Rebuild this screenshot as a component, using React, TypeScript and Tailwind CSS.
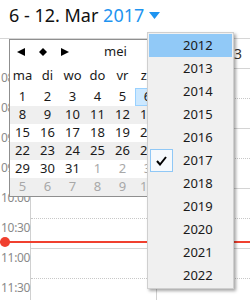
import React from "react";

const times = ["08:00", "08:30", "09:00", "09:30", "10:00", "10:30", "11:00", "11:30"];
const years = [2012, 2013, 2014, 2015, 2016, 2017, 2018, 2019, 2020, 2021, 2022];
const dayNames = ["ma", "di", "wo", "do", "vr", "za", "zo"];
const weeks: { d: number; muted: boolean }[][] = [
  [1, 2, 3, 4, 5, 6, 7].map((d) => ({ d, muted: false })),
  [8, 9, 10, 11, 12, 13, 14].map((d) => ({ d, muted: false })),
  [15, 16, 17, 18, 19, 20, 21].map((d) => ({ d, muted: false })),
  [22, 23, 24, 25, 26, 27, 28].map((d) => ({ d, muted: false })),
  [
    { d: 29, muted: false },
    { d: 30, muted: false },
    { d: 31, muted: false },
    { d: 1, muted: true },
    { d: 2, muted: true },
    { d: 3, muted: true },
    { d: 4, muted: true },
  ],
  [5, 6, 7, 8, 9, 10, 11].map((d) => ({ d, muted: true })),
];

export default function App() {
  return (
    <div className="relative w-[250px] h-[300px] overflow-hidden bg-white font-['Noto_Sans','Open_Sans',sans-serif] text-[#1a1a1a]">
      {/* header */}
      <div className="h-[39px] border-b border-[#d6d6d6] flex items-start pl-[9px] pt-[3px] text-[18px] leading-[24px]">
        <span className="text-[#111]">6 - 12. Mar&nbsp;</span>
        <span className="text-[#1e94f0]">2017</span>
        <svg width="11" height="8" viewBox="0 0 11 8" className="ml-[5px] mt-[9px]">
          <path d="M0 0 L11 0 L5.5 7 Z" fill="#1e94f0" />
        </svg>
      </div>

      {/* body */}
      <div className="flex flex-col">
        <div className="h-[29px] grid grid-cols-[31px_126px_1fr]">
          <div className="border-r border-[#d0d0d0]" />
          <div className="border-r border-[#d0d0d0]" />
          <div className="flex items-center justify-end pr-[8px] text-[14px] text-[#333]">13</div>
        </div>
        {times.map((t, i) => (
          <div key={t} className="h-[30px] grid grid-cols-[31px_126px_1fr]">
            <div className="border-r border-[#d0d0d0] pl-[1px] pt-[2px] text-[12px] leading-[16px] text-[#8a8a8a] tracking-[-0.3px]">
              {t}
            </div>
            <div
              className={
                i % 2 === 0
                  ? "border-t border-r border-t-[#d4d4d4] border-r-[#d0d0d0]"
                  : "border-t border-r border-dotted border-t-[#c8c8c8] border-r-[#d0d0d0] [border-right-style:solid]"
              }
            />
            <div
              className={
                i % 2 === 0
                  ? "border-t border-[#d4d4d4]"
                  : "border-t border-dotted border-[#c8c8c8]"
              }
            />
          </div>
        ))}
      </div>

      {/* current time indicator */}
      <div className="absolute left-0 right-0 top-[241px] h-[2px] bg-[#f0402f]" />
      <div className="absolute left-0 top-[237px] w-[10px] h-[10px] rounded-full bg-[#f0402f]" />

      {/* mini calendar */}
      <div className="absolute left-[9px] top-[39px] w-[178px] h-[158px] border border-[#8f8f8f] bg-white flex flex-col">
        <div className="h-[24px] flex items-center text-[13px]">
          <div className="w-[22px] flex justify-center">
            <svg width="8" height="8" viewBox="0 0 8 8">
              <path d="M0 4 L8 0 L8 8 Z" fill="#000" />
            </svg>
          </div>
          <div className="w-[22px] flex justify-center">
            <svg width="8" height="8" viewBox="0 0 8 8">
              <path d="M4 0 L8 4 L4 8 L0 4 Z" fill="#000" />
            </svg>
          </div>
          <div className="w-[22px] flex justify-center">
            <svg width="8" height="8" viewBox="0 0 8 8">
              <path d="M8 4 L0 0 L0 8 Z" fill="#000" />
            </svg>
          </div>
          <span className="ml-[28px] text-[#1a1a1a]">mei</span>
        </div>
        <div className="h-[24px] grid grid-cols-[repeat(7,25px)] items-center text-[13px]">
          {dayNames.map((n) => (
            <div key={n} className="text-center">
              {n}
            </div>
          ))}
        </div>
        {weeks.map((w, wi) => (
          <div
            key={wi}
            className={
              "h-[18px] grid grid-cols-[repeat(7,25px)] items-center text-[13px] " +
              (wi % 2 === 1 ? "bg-[#efefef]" : "bg-white")
            }
          >
            {w.map((c, ci) => {
              const sel = wi === 0 && ci === 5;
              return (
                <div
                  key={ci}
                  className={
                    "h-[18px] flex items-center justify-center " +
                    (c.muted ? "text-[#a8a8a8] " : "text-[#1a1a1a] ") +
                    (sel ? "bg-[#cce8ff] border border-[#99d1ff]" : "")
                  }
                >
                  {c.d}
                </div>
              );
            })}
          </div>
        ))}
      </div>

      {/* year dropdown */}
      <div className="absolute left-[147px] top-[32px] w-[87px] border border-[#cfcfcf] bg-[#f0f0f0] p-px shadow-[2px_2px_3px_rgba(0,0,0,0.35)]">
        {years.map((y) => {
          const sel = y === 2012;
          const checked = y === 2017;
          return (
            <div
              key={y}
              className={
                "relative h-[23px] flex items-center pl-[34px] text-[13px] text-[#1a1a1a] " +
                (sel ? "bg-[#91c9f7]" : "")
              }
            >
              {checked && (
                <div className="absolute left-[1px] top-0 w-[23px] h-[23px] border border-[#90c8f6] bg-[#f6f9fc] flex items-center justify-center">
                  <svg width="11" height="10" viewBox="0 0 11 10">
                    <path d="M1 5 L4 8.5 L10 1" stroke="#000" strokeWidth="2" fill="none" />
                  </svg>
                </div>
              )}
              {y}
            </div>
          );
        })}
      </div>
    </div>
  );
}
